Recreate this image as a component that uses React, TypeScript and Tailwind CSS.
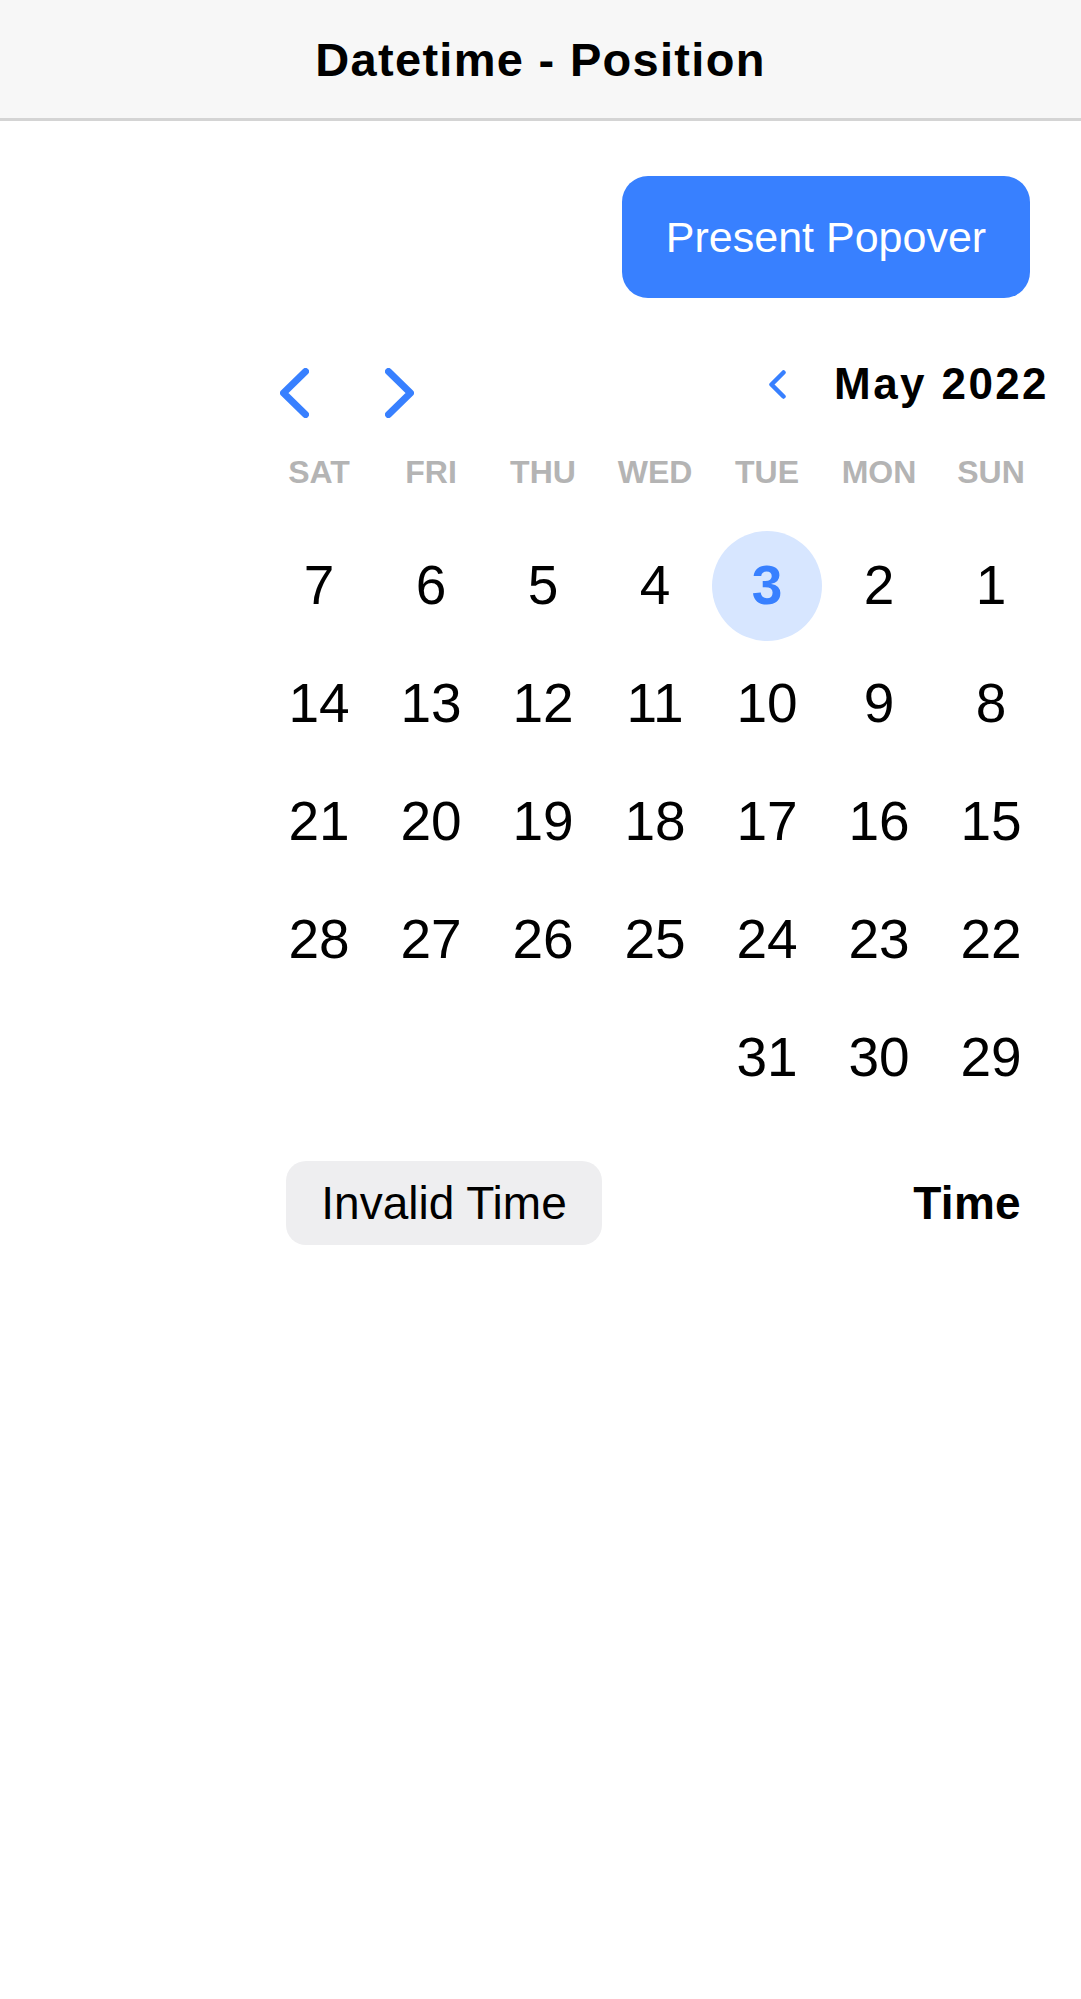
import React from 'react'

const WEEKDAYS = ['SAT', 'FRI', 'THU', 'WED', 'TUE', 'MON', 'SUN']

// rows laid out right-to-left: SAT ... SUN
const WEEKS: (number | null)[][] = [
  [7, 6, 5, 4, 3, 2, 1],
  [14, 13, 12, 11, 10, 9, 8],
  [21, 20, 19, 18, 17, 16, 15],
  [28, 27, 26, 25, 24, 23, 22],
  [null, null, null, null, 31, 30, 29],
]

const SELECTED = 3

function ChevronLeft() {
  return (
    <svg width="29" height="50" viewBox="0 0 29 50" fill="none">
      <polyline
        points="25.5,3.5 3.5,25 25.5,46.5"
        stroke="#3880ff"
        strokeWidth="7"
        strokeLinecap="round"
        strokeLinejoin="round"
      />
    </svg>
  )
}

function ChevronRight() {
  return (
    <svg width="29" height="50" viewBox="0 0 29 50" fill="none">
      <polyline
        points="3.5,3.5 25.5,25 3.5,46.5"
        stroke="#3880ff"
        strokeWidth="7"
        strokeLinecap="round"
        strokeLinejoin="round"
      />
    </svg>
  )
}

function SmallChevron() {
  return (
    <svg width="17" height="29" viewBox="0 0 17 29" fill="none">
      <polyline
        points="14.5,2.5 2.5,14.5 14.5,26.5"
        stroke="#3880ff"
        strokeWidth="4.5"
        strokeLinecap="round"
        strokeLinejoin="round"
      />
    </svg>
  )
}

export default function App() {
  return (
    <div className="min-h-screen bg-white font-['Liberation_Sans',Arial,sans-serif] text-black">
      {/* Toolbar */}
      <header className="h-[121px] bg-[#f7f7f7] border-b-[3px] border-[#d4d4d4] flex items-center justify-center">
        <h1 className="text-[47px] font-bold tracking-[1.3px] leading-none">Datetime - Position</h1>
      </header>

      {/* Trigger */}
      <div className="flex justify-end pr-[51px] pt-[55px]">
        <button className="w-[408px] h-[122px] rounded-[26px] bg-[#3880ff] text-white text-[43px] leading-none">
          Present Popover
        </button>
      </div>

      {/* Calendar */}
      <div className="ml-[263px] w-[784px]">
        <div className="flex items-start justify-between pt-[64px]">
          <div className="flex items-center gap-[76px] pl-[17px] mt-[6px]">
            <ChevronLeft />
            <ChevronRight />
          </div>
          <div className="flex items-center h-[44px] gap-[48px] -mr-[2px]">
            <SmallChevron />
            <span className="text-[44px] font-bold leading-[44px] tracking-[2.4px]">May 2022</span>
          </div>
        </div>

        <div className="grid grid-cols-7 mt-[29px]">
          {WEEKDAYS.map((d) => (
            <div key={d} className="text-center text-[32px] font-bold leading-[50px] text-[#b4b4b4]">
              {d}
            </div>
          ))}
        </div>

        <div className="mt-[29.5px]">
          {WEEKS.map((week, i) => (
            <div key={i} className="grid grid-cols-7 h-[118px]">
              {week.map((day, j) => (
                <div key={j} className="flex items-center justify-center">
                  {day === SELECTED ? (
                    <div className="w-[110px] h-[110px] rounded-full bg-[#d7e6ff] flex items-center justify-center text-[55px] font-bold leading-none text-[#3880ff]">
                      {day}
                    </div>
                  ) : (
                    day !== null && <span className="text-[55px] leading-none">{day}</span>
                  )}
                </div>
              ))}
            </div>
          ))}
        </div>

        {/* Time row */}
        <div className="flex items-center justify-between mt-[44.5px] pl-[23px] pr-[26px]">
          <div className="w-[316px] h-[84px] rounded-[20px] bg-[#eeeef0] flex items-center justify-center text-[46px] leading-none">
            Invalid Time
          </div>
          <span className="text-[46px] font-bold leading-none tracking-[0.3px]">Time</span>
        </div>
      </div>
    </div>
  )
}
